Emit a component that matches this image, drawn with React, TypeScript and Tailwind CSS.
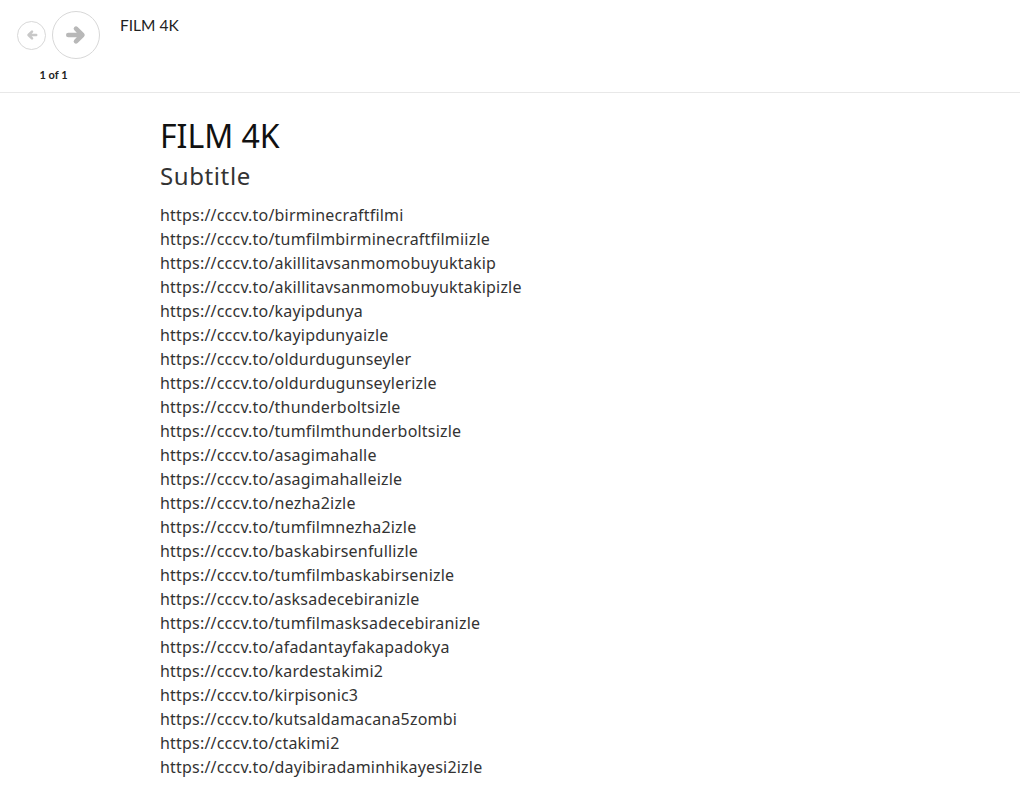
import React from "react";

const links = [
  "birminecraftfilmi",
  "tumfilmbirminecraftfilmiizle",
  "akillitavsanmomobuyuktakip",
  "akillitavsanmomobuyuktakipizle",
  "kayipdunya",
  "kayipdunyaizle",
  "oldurdugunseyler",
  "oldurdugunseylerizle",
  "thunderboltsizle",
  "tumfilmthunderboltsizle",
  "asagimahalle",
  "asagimahalleizle",
  "nezha2izle",
  "tumfilmnezha2izle",
  "baskabirsenfullizle",
  "tumfilmbaskabirsenizle",
  "asksadecebiranizle",
  "tumfilmasksadecebiranizle",
  "afadantayfakapadokya",
  "kardestakimi2",
  "kirpisonic3",
  "kutsaldamacana5zombi",
  "ctakimi2",
  "dayibiradaminhikayesi2izle",
];

// chunky arrow, points right unless flipped
const Arrow = ({ size, flip, color }: { size: number; flip?: boolean; color: string }) => (
  <svg
    width={size}
    height={size}
    viewBox="0 0 20 20"
    className={flip ? "-scale-x-100" : ""}
  >
    <path
      d="M3 10 H15.5 M10 4.2 L15.8 10 L10 15.8"
      fill="none"
      stroke={color}
      strokeWidth={4.2}
      strokeLinecap="round"
      strokeLinejoin="round"
    />
  </svg>
);

const Header = () => {
  return (
    <div className="h-[93px] w-full border-b border-[#e8e8e8] flex">
      <div className="flex flex-col items-center pl-[17px] pt-[11px]">
        <div className="flex items-center gap-[6px]">
          <button className="size-[29px] rounded-full border border-[#d8d8d8] flex items-center justify-center">
            <Arrow size={12} flip color="#c8c8c8" />
          </button>
          <button className="size-[48px] rounded-full border border-[#d8d8d8] flex items-center justify-center">
            <Arrow size={22} color="#b8b8b8" />
          </button>
        </div>
        <div className="mt-[8px] text-[11px] font-bold text-[#222] font-['Lato',sans-serif] pr-[10px]">
          1 of 1
        </div>
      </div>
      <div className="pl-[20px] pt-[14px] text-[15.5px] text-[#222] font-['Lato',sans-serif]">
        FILM 4K
      </div>
    </div>
  );
};

export default function App() {
  return (
    <div className="min-h-screen bg-white font-['Noto_Sans',sans-serif]">
      <Header />
      <div className="pl-[160px] pt-[22px]">
        <h1 className="text-[32px] leading-[42px] text-[#111]">FILM 4K</h1>
        <h2 className="text-[24px] leading-[34px] tracking-[0.6px] text-[#333] mt-[2px]">Subtitle</h2>
        <div className="mt-[10px] text-[16px] leading-[24px] tracking-[0.2px] text-[#333]">
          {links.map((l, i) => (
            <div key={i}>https://cccv.to/{l}</div>
          ))}
        </div>
      </div>
    </div>
  );
}
